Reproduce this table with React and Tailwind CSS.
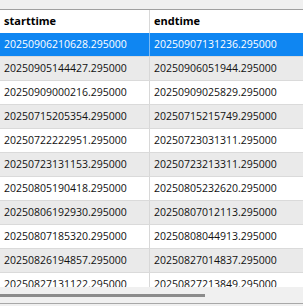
import React from "react";

const rows = [
  ["20250906210628.295000", "20250907131236.295000"],
  ["20250905144427.295000", "20250906051944.295000"],
  ["20250909000216.295000", "20250909025829.295000"],
  ["20250715205354.295000", "20250715215749.295000"],
  ["20250722222951.295000", "20250723031311.295000"],
  ["20250723131153.295000", "20250723213311.295000"],
  ["20250805190418.295000", "20250805232620.295000"],
  ["20250806192930.295000", "20250807012113.295000"],
  ["20250807185320.295000", "20250808044913.295000"],
  ["20250826194857.295000", "20250827014837.295000"],
  ["20250827131122.295000", "20250827213849.295000"],
];

const App = () => {
  const selected = 0;

  return (
    <div
      className="w-[303px] h-[306px] overflow-hidden bg-[#f0f0f0] flex flex-col text-[10.5px] text-[#111]"
      style={{ fontFamily: '"Segoe UI", "Open Sans", "Noto Sans", sans-serif' }}
    >
      <div className="h-[10px] shrink-0 border-b border-[#a0a0a0]" />

      <div className="h-[23px] shrink-0 flex bg-white font-bold text-[11px] text-black">
        <div className="w-[150px] border-r border-[#d8d8d8] pl-[4px] flex items-center">starttime</div>
        <div className="flex-1 pl-[4px] flex items-center">endtime</div>
      </div>

      <div className="h-[254px] shrink-0 overflow-hidden bg-white">
        {rows.map((r, i) => {
          const isSel = i === selected;
          const bg = isSel ? "bg-[#0f86f2] text-white" : i % 2 === 1 ? "bg-[#eaeaea]" : "bg-white";
          return (
            <div key={i} className={`h-[24px] flex border-b border-[#dadada] ${bg}`}>
              <div
                className={`w-[150px] pl-[4px] pt-[1px] flex items-center border-r ${
                  isSel ? "border-[#7dbaf3]" : "border-[#d8d8d8]"
                }`}
              >
                {r[0]}
              </div>
              <div className="flex-1 pl-[4px] pt-[1px] flex items-center">{r[1]}</div>
            </div>
          );
        })}
      </div>

      <div className="flex-1 flex flex-col">
        <div className="h-[7px]" />
        <div className="h-[3px] w-[205px] bg-[#8c8c8c]" />
        <div className="h-[6px]" />
        <div className="h-[1px] bg-[#a8a8a8]" />
      </div>
    </div>
  );
};

export default App;
